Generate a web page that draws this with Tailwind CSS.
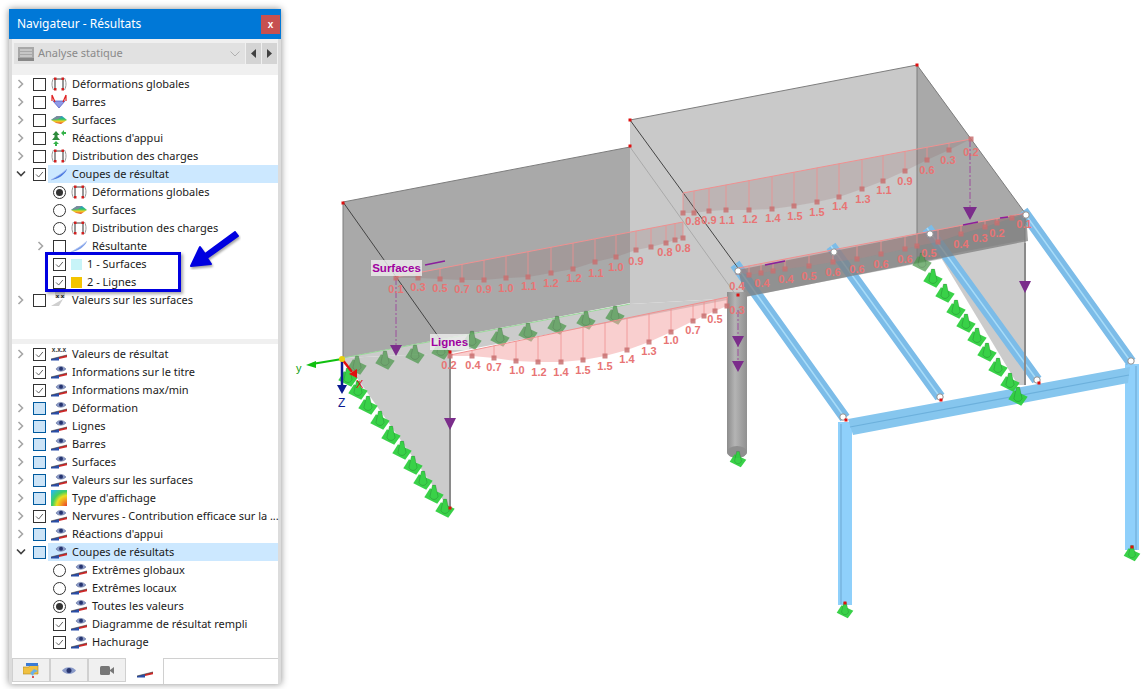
<!DOCTYPE html>
<html lang="fr">
<head>
<meta charset="UTF-8">
<title>Navigateur - Résultats</title>
<script src="https://cdn.jsdelivr.net/npm/@tailwindcss/browser@4"></script>
</head>
<body class="bg-white w-[1146px] h-[689px] overflow-hidden flex font-['Noto_Sans',sans-serif] text-[11px] text-[#1a1a1a]">

<!-- icon symbols -->
<svg class="absolute w-0 h-0">
  <defs>
    <linearGradient id="rainbow" x1="0" y1="0" x2="0" y2="1">
      <stop offset="0" stop-color="#2b8fe0"/><stop offset=".4" stop-color="#2fc46a"/><stop offset=".65" stop-color="#f2d224"/><stop offset="1" stop-color="#e8402c"/>
    </linearGradient>
    <radialGradient id="rings" cx="1" cy="1" r="1.3">
      <stop offset="0" stop-color="#e8402c"/><stop offset=".3" stop-color="#f2a020"/><stop offset=".5" stop-color="#e8e020"/><stop offset=".7" stop-color="#40d060"/><stop offset="1" stop-color="#28b8e8"/>
    </radialGradient>
    <linearGradient id="col" x1="0" y1="0" x2="1" y2="0">
      <stop offset="0" stop-color="#8c8c8c"/><stop offset=".4" stop-color="#b4b4b4"/><stop offset="1" stop-color="#909090"/>
    </linearGradient>
    <symbol id="i-def" viewBox="0 0 16 16">
      <path d="M2.500 14C.5 10 .5 6 2.500 2M13.500 2c2 4 2 8 0 12" fill="none" stroke="#999" stroke-width="1"/>
      <path d="M4 13V3h8v10" fill="none" stroke="#444" stroke-width="1.100"/>
      <rect x="3" y="1.500" width="2.500" height="2.500" fill="#d02020"/><rect x="10.500" y="1.500" width="2.500" height="2.500" fill="#d02020"/>
      <rect x="3" y="12" width="2.500" height="2.500" fill="#d02020"/><rect x="10.500" y="12" width="2.500" height="2.500" fill="#d02020"/>
    </symbol>
    <symbol id="i-bar" viewBox="0 0 16 16">
      <path d="M2 7h12L8 14z" fill="#8f9be8" stroke="#4a58c0" stroke-width=".7"/>
      <path d="M1 1l3 7M15 1l-3 7M1 1v6M15 1v6" stroke="#e02020" stroke-width="1.200" fill="none"/>
    </symbol>
    <symbol id="i-surf" viewBox="0 0 16 16">
      <path d="M0 8l6-4 5 0 5 4-6 4-5-1z" fill="url(#rainbow)"/>
      <path d="M0 8l6-4 5 0-4 3z" fill="#7a8a9a"/>
    </symbol>
    <symbol id="i-reac" viewBox="0 0 16 16">
      <path d="M5 1l3.500 4H6.500v2L9 10H1l2.500-3V5H1.500z" fill="#2e8b3c"/>
      <path d="M5 11l3 3H6v2H4v-2H2z" fill="#35b24a"/>
      <path d="M15 2v2h-2v2l-3-3 3-3v2z" fill="#35b24a"/>
    </symbol>
    <symbol id="i-coupe" viewBox="0 0 16 16">
      <path d="M0 14C5 11 11 8 16 3 14 9 7 13 0 14z" fill="#4a78e0"/>
      <path d="M0 14C5 11 11 8 16 3" fill="none" stroke="#9ab4ee" stroke-width=".8"/>
    </symbol>
    <symbol id="i-vals" viewBox="0 0 16 16">
      <path d="M0 14 12 7l-4 7z" fill="#cfcfcf"/>
      <rect x="4" y="0" width="10" height="6" fill="#d8d8d8"/>
      <text x="9" y="5.500" font-size="6" font-weight="700" text-anchor="middle" fill="#222">x x</text>
    </symbol>
    <symbol id="i-wedge" viewBox="0 0 16 16">
      <path d="M0 13 8 11v3.500H0z" fill="#2b4ea8"/><path d="M8 11l8-2v2.200L8 13z" fill="#d02828"/><path d="M0 13l16-4" stroke="#333" stroke-width=".6"/>
    </symbol>
    <symbol id="i-eye" viewBox="0 0 16 16">
      <use href="#i-wedge" width="16" height="16"/>
      <path d="M5 5c2-3.500 7-3.500 10 0-3 3-8 3-10 0z" fill="#8a9ac8" stroke="#55658f" stroke-width=".5"/>
      <circle cx="10" cy="4.700" r="2" fill="#27356f"/>
    </symbol>
    <symbol id="i-xxx" viewBox="0 0 16 16">
      <use href="#i-wedge" width="16" height="16"/>
      <text x="8" y="5.500" font-size="6.500" font-weight="700" text-anchor="middle" fill="#333" font-family="Liberation Sans">x.x.x</text>
    </symbol>
    <symbol id="i-type" viewBox="0 0 16 16">
      <rect width="16" height="16" fill="url(#rings)"/>
    </symbol>
    <symbol id="c-r" viewBox="0 0 8 10"><path d="M1.500 1l4 4-4 4" fill="none" stroke="#a6a6a6" stroke-width="1.600"/></symbol>
    <symbol id="c-d" viewBox="0 0 10 8"><path d="M1 1.500l4 4 4-4" fill="none" stroke="#404040" stroke-width="1.600"/></symbol>
    <symbol id="tick" viewBox="0 0 13 13"><path d="M2.500 6.500l3 3 5-6" fill="none" stroke="#555" stroke-width="1.100"/></symbol>
    <symbol id="green" viewBox="-13 -13 26 26">
      <path d="M-12 4 -5 -7 12 1 4 12z" fill="currentColor"/>
      <path d="M-5 3-2-11H2L5 3C3 8-3 8-5 3z" fill="currentColor" stroke="#000" stroke-opacity=".2"/>
    </symbol>
  </defs>
</svg>

<!-- navigator panel -->
<aside class="relative shrink-0 ml-[9px] mt-[9px] w-[272px] h-[675px] flex flex-col bg-white shadow-[0_0_7px_rgba(0,0,0,0.45)]">
  <div class="h-[30px] shrink-0 bg-[#0078d7] flex items-center justify-between pl-2 pr-px text-white text-[12px]">
    <span>Navigateur - Résultats</span>
    <span class="w-[19px] h-[19px] bg-[#c75050] flex items-center justify-center font-bold text-[10px] font-['Liberation_Sans',sans-serif]">x</span>
  </div>
  <div class="flex-1 flex flex-col border-x-[3px] border-x-[#dcdcdc] min-h-0">
    <div class="h-[36px] shrink-0 bg-[#f0f0f0] pt-1 pl-0.5 flex gap-px items-start">
      <div class="w-[231px] h-[21px] bg-[#e1e1e1] flex items-center pl-1 text-[#8a8a8a]">
        <svg class="w-[16px] h-[14px]" viewBox="0 0 16 14"><rect width="16" height="14" fill="#a8a8a8"/><path d="M2 3h12M2 6h12M2 9h12" stroke="#e4e4e4"/><rect y="11" width="16" height="3" fill="#888"/></svg>
        <span class="ml-1">Analyse statique</span>
        <svg class="ml-auto mr-[5px] w-[10px] h-[6px]" viewBox="0 0 10 6"><path d="M.5.500 5 5 9.500.500" fill="none" stroke="#b0b0b0"/></svg>
      </div>
      <div class="w-[15px] h-[21px] bg-[#d4d4d4] flex items-center justify-center"><svg class="w-[5px] h-[9px]" viewBox="0 0 5 9"><path d="M5 0v9L0 4.500z" fill="#404040"/></svg></div>
      <div class="w-[15px] h-[21px] bg-[#d4d4d4] flex items-center justify-center"><svg class="w-[5px] h-[9px]" viewBox="0 0 5 9"><path d="M0 0v9l5-4.500z" fill="#404040"/></svg></div>
    </div>

    <!-- results tree -->
    <div class="h-[264px] shrink-0">
      <div class="flex h-[18px] items-center pl-[5px]"><svg class="w-[8px] h-[10px]"><use href="#c-r"/></svg><span class="ml-[8px] w-[13px] h-[13px] border border-[#333] bg-white"></span><svg class="ml-[5px] w-[16px] h-[16px]"><use href="#i-def"/></svg><span class="ml-[5px]">Déformations globales</span></div>
      <div class="flex h-[18px] items-center pl-[5px]"><svg class="w-[8px] h-[10px]"><use href="#c-r"/></svg><span class="ml-[8px] w-[13px] h-[13px] border border-[#333] bg-white"></span><svg class="ml-[5px] w-[16px] h-[16px]"><use href="#i-bar"/></svg><span class="ml-[5px]">Barres</span></div>
      <div class="flex h-[18px] items-center pl-[5px]"><svg class="w-[8px] h-[10px]"><use href="#c-r"/></svg><span class="ml-[8px] w-[13px] h-[13px] border border-[#333] bg-white"></span><svg class="ml-[5px] w-[16px] h-[16px]"><use href="#i-surf"/></svg><span class="ml-[5px]">Surfaces</span></div>
      <div class="flex h-[18px] items-center pl-[5px]"><svg class="w-[8px] h-[10px]"><use href="#c-r"/></svg><span class="ml-[8px] w-[13px] h-[13px] border border-[#333] bg-white"></span><svg class="ml-[5px] w-[16px] h-[16px]"><use href="#i-reac"/></svg><span class="ml-[5px]">Réactions d'appui</span></div>
      <div class="flex h-[18px] items-center pl-[5px]"><svg class="w-[8px] h-[10px]"><use href="#c-r"/></svg><span class="ml-[8px] w-[13px] h-[13px] border border-[#333] bg-white"></span><svg class="ml-[5px] w-[16px] h-[16px]"><use href="#i-def"/></svg><span class="ml-[5px]">Distribution des charges</span></div>
      <div class="flex h-[18px] items-center pl-1"><svg class="w-[10px] h-[8px]"><use href="#c-d"/></svg><span class="ml-[7px] w-[13px] h-[13px] border border-[#333] bg-white"><svg class="w-[11px] h-[11px]"><use href="#tick"/></svg></span><div class="ml-[2px] flex-1 h-full flex items-center bg-[#cce8ff] pl-[3px]"><svg class="w-[16px] h-[16px]"><use href="#i-coupe"/></svg><span class="ml-[5px]">Coupes de résultat</span></div></div>

      <div class="flex h-[18px] items-center pl-[41px]"><span class="w-[13px] h-[13px] rounded-full border border-[#333] bg-white flex items-center justify-center"><span class="w-[7px] h-[7px] rounded-full bg-[#333]"></span></span><svg class="ml-[5px] w-[16px] h-[16px]"><use href="#i-def"/></svg><span class="ml-[5px]">Déformations globales</span></div>
      <div class="flex h-[18px] items-center pl-[41px]"><span class="w-[13px] h-[13px] rounded-full border border-[#333] bg-white"></span><svg class="ml-[5px] w-[16px] h-[16px]"><use href="#i-surf"/></svg><span class="ml-[5px]">Surfaces</span></div>
      <div class="flex h-[18px] items-center pl-[41px]"><span class="w-[13px] h-[13px] rounded-full border border-[#333] bg-white"></span><svg class="ml-[5px] w-[16px] h-[16px]"><use href="#i-def"/></svg><span class="ml-[5px]">Distribution des charges</span></div>
      <div class="flex h-[18px] items-center pl-[25px]"><svg class="w-[8px] h-[10px]"><use href="#c-r"/></svg><span class="ml-[8px] w-[13px] h-[13px] border border-[#333] bg-white"></span><svg class="ml-[5px] w-[16px] h-[16px] opacity-70"><use href="#i-coupe"/></svg><span class="ml-[5px]">Résultante</span></div>
      <div class="flex h-[18px] items-center pl-[41px]"><span class="w-[13px] h-[13px] border border-[#333] bg-white"><svg class="w-[11px] h-[11px]"><use href="#tick"/></svg></span><span class="ml-[5px] w-[11px] h-[11px] bg-[#c8f4f8]"></span><span class="ml-[5px]">1 - Surfaces</span></div>
      <div class="flex h-[18px] items-center pl-[41px]"><span class="w-[13px] h-[13px] border border-[#333] bg-white"><svg class="w-[11px] h-[11px]"><use href="#tick"/></svg></span><span class="ml-[5px] w-[11px] h-[11px] bg-[#f4c400]"></span><span class="ml-[5px]">2 - Lignes</span></div>
      <div class="flex h-[18px] items-center pl-[5px]"><svg class="w-[8px] h-[10px]"><use href="#c-r"/></svg><span class="ml-[8px] w-[13px] h-[13px] border border-[#333] bg-white"></span><svg class="ml-[5px] w-[16px] h-[16px]"><use href="#i-vals"/></svg><span class="ml-[5px]">Valeurs sur les surfaces</span></div>
    </div>

    <div class="h-[5px] shrink-0 bg-[#f0f0f0]"></div>

    <!-- display tree -->
    <div class="flex-1 pt-[1px] min-h-0">
      <div class="flex h-[18px] items-center pl-[5px]"><svg class="w-[8px] h-[10px]"><use href="#c-r"/></svg><span class="ml-[8px] w-[13px] h-[13px] border border-[#333] bg-white"><svg class="w-[11px] h-[11px]"><use href="#tick"/></svg></span><svg class="ml-[5px] w-[16px] h-[16px]"><use href="#i-xxx"/></svg><span class="ml-[5px]">Valeurs de résultat</span></div>
      <div class="flex h-[18px] items-center pl-[21px]"><span class="w-[13px] h-[13px] border border-[#333] bg-white"><svg class="w-[11px] h-[11px]"><use href="#tick"/></svg></span><svg class="ml-[5px] w-[16px] h-[16px]"><use href="#i-eye"/></svg><span class="ml-[5px]">Informations sur le titre</span></div>
      <div class="flex h-[18px] items-center pl-[21px]"><span class="w-[13px] h-[13px] border border-[#333] bg-white"><svg class="w-[11px] h-[11px]"><use href="#tick"/></svg></span><svg class="ml-[5px] w-[16px] h-[16px]"><use href="#i-eye"/></svg><span class="ml-[5px]">Informations max/min</span></div>
      <div class="flex h-[18px] items-center pl-[5px]"><svg class="w-[8px] h-[10px]"><use href="#c-r"/></svg><span class="ml-[8px] w-[13px] h-[13px] border border-[#005a9e] bg-[#cce4f7]"></span><svg class="ml-[5px] w-[16px] h-[16px]"><use href="#i-eye"/></svg><span class="ml-[5px]">Déformation</span></div>
      <div class="flex h-[18px] items-center pl-[5px]"><svg class="w-[8px] h-[10px]"><use href="#c-r"/></svg><span class="ml-[8px] w-[13px] h-[13px] border border-[#005a9e] bg-[#cce4f7]"></span><svg class="ml-[5px] w-[16px] h-[16px]"><use href="#i-eye"/></svg><span class="ml-[5px]">Lignes</span></div>
      <div class="flex h-[18px] items-center pl-[5px]"><svg class="w-[8px] h-[10px]"><use href="#c-r"/></svg><span class="ml-[8px] w-[13px] h-[13px] border border-[#005a9e] bg-[#cce4f7]"></span><svg class="ml-[5px] w-[16px] h-[16px]"><use href="#i-eye"/></svg><span class="ml-[5px]">Barres</span></div>
      <div class="flex h-[18px] items-center pl-[5px]"><svg class="w-[8px] h-[10px]"><use href="#c-r"/></svg><span class="ml-[8px] w-[13px] h-[13px] border border-[#005a9e] bg-[#cce4f7]"></span><svg class="ml-[5px] w-[16px] h-[16px]"><use href="#i-eye"/></svg><span class="ml-[5px]">Surfaces</span></div>
      <div class="flex h-[18px] items-center pl-[5px]"><svg class="w-[8px] h-[10px]"><use href="#c-r"/></svg><span class="ml-[8px] w-[13px] h-[13px] border border-[#005a9e] bg-[#cce4f7]"></span><svg class="ml-[5px] w-[16px] h-[16px]"><use href="#i-eye"/></svg><span class="ml-[5px]">Valeurs sur les surfaces</span></div>
      <div class="flex h-[18px] items-center pl-[5px]"><svg class="w-[8px] h-[10px]"><use href="#c-r"/></svg><span class="ml-[8px] w-[13px] h-[13px] border border-[#005a9e] bg-[#cce4f7]"></span><svg class="ml-[5px] w-[16px] h-[16px]"><use href="#i-type"/></svg><span class="ml-[5px]">Type d'affichage</span></div>
      <div class="flex h-[18px] items-center pl-[5px]"><svg class="shrink-0 w-[8px] h-[10px]"><use href="#c-r"/></svg><span class="shrink-0 ml-[8px] w-[13px] h-[13px] border border-[#333] bg-white"><svg class="w-[11px] h-[11px]"><use href="#tick"/></svg></span><svg class="shrink-0 ml-[5px] w-[16px] h-[16px]"><use href="#i-eye"/></svg><span class="ml-[5px] whitespace-nowrap tracking-[-0.02px]">Nervures - Contribution efficace sur la ...</span></div>
      <div class="flex h-[18px] items-center pl-[5px]"><svg class="w-[8px] h-[10px]"><use href="#c-r"/></svg><span class="ml-[8px] w-[13px] h-[13px] border border-[#005a9e] bg-[#cce4f7]"></span><svg class="ml-[5px] w-[16px] h-[16px]"><use href="#i-eye"/></svg><span class="ml-[5px]">Réactions d'appui</span></div>
      <div class="flex h-[18px] items-center pl-1"><svg class="w-[10px] h-[8px]"><use href="#c-d"/></svg><span class="ml-[7px] w-[13px] h-[13px] border border-[#005a9e] bg-[#cce4f7]"></span><div class="ml-[2px] flex-1 h-full flex items-center bg-[#cce8ff] pl-[3px]"><svg class="w-[16px] h-[16px]"><use href="#i-eye"/></svg><span class="ml-[5px]">Coupes de résultats</span></div></div>
      <div class="flex h-[18px] items-center pl-[41px]"><span class="w-[13px] h-[13px] rounded-full border border-[#333] bg-white"></span><svg class="ml-[5px] w-[16px] h-[16px]"><use href="#i-eye"/></svg><span class="ml-[5px]">Extrêmes globaux</span></div>
      <div class="flex h-[18px] items-center pl-[41px]"><span class="w-[13px] h-[13px] rounded-full border border-[#333] bg-white"></span><svg class="ml-[5px] w-[16px] h-[16px]"><use href="#i-eye"/></svg><span class="ml-[5px]">Extrêmes locaux</span></div>
      <div class="flex h-[18px] items-center pl-[41px]"><span class="w-[13px] h-[13px] rounded-full border border-[#333] bg-white flex items-center justify-center"><span class="w-[7px] h-[7px] rounded-full bg-[#333]"></span></span><svg class="ml-[5px] w-[16px] h-[16px]"><use href="#i-eye"/></svg><span class="ml-[5px]">Toutes les valeurs</span></div>
      <div class="flex h-[18px] items-center pl-[41px]"><span class="w-[13px] h-[13px] border border-[#333] bg-white"><svg class="w-[11px] h-[11px]"><use href="#tick"/></svg></span><svg class="ml-[5px] w-[16px] h-[16px]"><use href="#i-eye"/></svg><span class="ml-[5px]">Diagramme de résultat rempli</span></div>
      <div class="flex h-[18px] items-center pl-[41px]"><span class="w-[13px] h-[13px] border border-[#333] bg-white"><svg class="w-[11px] h-[11px]"><use href="#tick"/></svg></span><svg class="ml-[5px] w-[16px] h-[16px]"><use href="#i-eye"/></svg><span class="ml-[5px]">Hachurage</span></div>
    </div>

    <!-- bottom tabs -->
    <div class="h-[26px] shrink-0 flex items-start">
      <div class="w-[38px] h-[24px] bg-[#f0f0f0] border border-[#d0d0d0] flex items-center justify-center"><svg class="w-[16px] h-[16px]" viewBox="0 0 16 16"><path d="M0 5h6l1-2h8v9H0z" fill="#f0c040" stroke="#b08820" stroke-width=".6"/><rect x="3" y="1" width="12" height="3" fill="#3a7bd5"/><path d="M7 11l4-4 4 2-4 2-1 3z" fill="#6ab0e8"/><circle cx="10" cy="15" r="1" fill="#d02020"/></svg></div>
      <div class="w-[38px] h-[24px] bg-[#f0f0f0] border border-[#d0d0d0] flex items-center justify-center"><svg class="w-[14px] h-[9px]" viewBox="0 0 14 9"><path d="M0 4.500C3 0 11 0 14 4.500 11 9 3 9 0 4.500z" fill="#8a9ac8"/><circle cx="7" cy="4.500" r="2.500" fill="#27356f"/></svg></div>
      <div class="w-[38px] h-[24px] bg-[#f0f0f0] border border-[#d0d0d0] flex items-center justify-center"><svg class="w-[14px] h-[9px]" viewBox="0 0 14 9"><rect width="10" height="9" rx="1.500" fill="#777"/><path d="M10 4l4-3v7l-4-3z" fill="#777"/></svg></div>
      <div class="w-[38px] h-[26px] bg-white flex items-center justify-center border-r border-[#d0d0d0]"><svg class="w-[16px] h-[16px]"><use href="#i-wedge"/></svg></div>
      <div class="flex-1 h-px bg-[#d0d0d0]"></div>
    </div>
  </div>

  <!-- callout over the tree -->
  <div class="absolute left-[36px] top-[243px] w-[136px] h-[40px] border-[3px] border-[#0000e0] shadow-[2px_2px_3px_rgba(0,0,0,0.35)]"></div>
  <svg class="absolute left-[178px] top-[217px] w-[54px] h-[44px]" viewBox="0 0 54 44">
    <path d="M48 6 18 28l-5-7L4 40l20-2-4-6L51 10z" fill="#0000e0" stroke="#0000e0" stroke-width="2" stroke-linejoin="round" style="filter:drop-shadow(1px 2px 1px rgba(0,0,0,.35))"/>
  </svg>
</aside>

<!-- 3D view -->
<svg id="view" class="shrink-0 w-[865px] h-[689px] font-['Liberation_Sans',sans-serif]" viewBox="281 0 865 689">
  <!-- walls -->
  <path d="M343 358 630 304 738 298 450 353z" fill="#cbcbcb"/>
  <path d="M343 358 450 353V510z" fill="#cbcbcb"/>
  <path d="M343 202 630 147V303L343 358z" fill="#a9a9a9"/>
  <path d="M630 120 917 65 1025 213V243L738 298 630 304z" fill="#c9c9c9"/>
  <path d="M917 65 1025 213V240L917 262z" fill="#a9a9a9"/>
  <path d="M940 256 1025 240V385H1018z" fill="#cbcbcb"/>
  <!-- frame beams -->
  <g id="frame">
    <path d="M838 422h14v183h-14zM1125 364h14v186h-14z" fill="#8fd0fb"/>
    <path d="M841 424v180M1136 366v184" stroke="#7dbbe6" stroke-width="2"/>
    <path d="M735 264 845 418M831 246 940 397M927 228 1037 380M1023 211 1131 362" stroke="#7cbce8" stroke-width="11"/>
    <path d="M735 264 845 418M831 246 940 397M927 228 1037 380M1023 211 1131 362" stroke="#a8dcf8" stroke-width="1.500"/>
    <path d="M848 419 1130 367 1128 383 853 435z" fill="#86c6ee"/>
    <path d="M850 427 1129 375" stroke="#6cb0dc" stroke-width="1.200"/>
  </g>
  <path d="M738 270 1026 213 1028 241 745 297z" fill="#7c7c7c" fill-opacity=".72"/>
  <path d="M727 292h20v160a10 6 0 0 1-20 0z" fill="url(#col)"/>
  <ellipse cx="737" cy="452" rx="10" ry="6" fill="#8f8f8f"/>
  <path d="M343 202V358M343 202 630 147M630 120 917 65M917 65V262M917 65 1025 213M1025 213V385" stroke="#7d7d7d" stroke-width="1" fill="none"/>
  <path d="M450 353V512M1025 243V385" stroke="#8a8a8a" stroke-width="2"/>
  <path d="M343 202 450 353M630 120 738 268" stroke="#444" stroke-width="1" fill="none"/>
  <path d="M630 147 738 298" stroke="#aaa" stroke-width="1"/>
  <path d="M343 358 630 304" stroke="#98d898" stroke-width="1"/>
  <g id="sup"></g>
  <path d="M396 278V345M970 140V208M738 310V370" stroke="#9c4f9c" stroke-width="1" stroke-dasharray="7 2 2 2"/>
  <g id="dia"></g>
  <path d="M390 345h12l-6 11zM963 207h14l-7 13zM732 336h12l-6 11zM732 361h12l-6 11zM444 418h12l-6 12zM1019 281h12l-6 12z" fill="#7b2d8b"/>
  <path d="M963 225l15-3M1000 218l8-1M425 265l20-4M765 265l20-4" stroke="#8a1f9c" stroke-width="1.500"/>
  <g id="nodes"></g>
  <!-- labels -->
  <rect x="371" y="260" width="51" height="16" fill="#efefef" fill-opacity=".8"/>
  <text x="396.500" y="272" text-anchor="middle" font-size="11.500" font-weight="700" fill="#a000a0">Surfaces</text>
  <rect x="430" y="334" width="39" height="16" fill="#efefef" fill-opacity=".8"/>
  <text x="449.500" y="346" text-anchor="middle" font-size="11.500" font-weight="700" fill="#a000a0">Lignes</text>
  <!-- axes -->
  <path d="M342 359 312 364" stroke="#10c010" stroke-width="2"/><path d="M306 365l10-4v7z" fill="#10c010"/>
  <path d="M342 359V386" stroke="#0a1a90" stroke-width="2.500"/><path d="M337 385h10l-5 9z" fill="#0a1a90"/>
  <path d="M342 359 352 372" stroke="#e01010" stroke-width="2.500"/><path d="M349 374l8-5 0 9z" fill="#e01010"/>
  <circle cx="342" cy="359" r="3" fill="#e8d010"/>
  <text x="296" y="372" font-size="11" fill="#10a010">y</text>
  <text x="338" y="407" font-size="12" fill="#0a1a90">Z</text>
  <text x="356" y="388" font-size="11" fill="#e01010">X</text>
</svg>

<script>
  const NS = 'http://www.w3.org/2000/svg';
  const add = (parent, tag, attrs, txt) => {
    const e = document.createElementNS(NS, tag);
    for (const k in attrs) e.setAttribute(k, attrs[k]);
    if (txt) e.textContent = txt;
    parent.appendChild(e);
  };

  // supports: muted ones behind the wall, bright ones on white
  const sup = document.getElementById('sup');
  const support = (x, y, size, color, op) => add(sup, 'use', { href: '#green', x: x - size / 2, y: y - size / 2, width: size, height: size, style: 'color:' + color, opacity: op });
  [[357,365],[385,360],[415,354],[441,350],[472,340],[500,337],[528,332],[557,325],[586,320],[615,315],[922,262]].forEach(p => support(p[0], p[1], 21, '#4f9a4f', .75));
  [[348,377],[358,390],[368,405],[380,420],[391,435],[402,450],[413,465],[423,480],[434,494],[445,508],
   [933,278],[945,293],[956,309],[966,323],[977,337],[987,352],[998,367],[1010,382],[1018,396]].forEach(p => support(p[0], p[1], 21, '#2fcf3f', .95));
  [[738,459],[845,610],[1132,553]].forEach(p => support(p[0], p[1], 18, '#2fcf3f', .95));

  // result diagrams: top edge, squares along the curve, labels
  const dia = document.getElementById('dia');
  const diagrams = [
    { fill: '#8a5a5a', op: .18, top: [[396,277],[683,222]], pts: [[396,278],[418,278],[440,279],[462,280],[484,280],[506,278],[528,277],[551,273],[573,269],[595,262],[616,257],[636,250],[651,247],[666,243],[675,240],[683,238]],
      labels: [['0.1',396,293],['0.3',418,291],['0.5',440,292],['0.7',462,293],['0.9',484,293],['1.0',506,292],['1.1',529,290],['1.2',551,287],['1.2',574,282],['1.1',596,277],['1.0',616,271],['0.9',636,265],['0.8',665,256],['0.8',683,252]] },
    { fill: '#8a5a5a', op: .18, top: [[683,193],[971,139]], pts: [[683,213],[694,213],[709,211],[726,210],[749,210],[772,209],[794,206],[817,202],[839,197],[862,189],[883,181],[905,171],[927,160],[949,150],[971,139]],
      labels: [['0.8',693,225],['0.9',709,224],['1.1',727,224],['1.2',750,223],['1.4',773,222],['1.5',795,220],['1.5',817,216],['1.4',840,210],['1.3',863,203],['1.1',884,194],['0.9',905,185],['0.6',927,174],['0.3',948,164],['0.2',971,156]] },
    { fill: '#f4a0a0', op: .5, top: [[450,355],[728,297]], pts: [[450,356],[472,356],[494,358],[516,361],[538,362],[561,362],[583,360],[605,356],[627,350],[649,342],[671,332],[693,321],[704,316],[715,311],[727,306]],
      labels: [['0.2',449,369],['0.4',473,369],['0.7',494,371],['1.0',517,374],['1.2',539,376],['1.4',561,376],['1.5',583,374],['1.5',605,370],['1.4',627,363],['1.3',649,355],['1.0',671,344],['0.7',693,334],['0.5',715,323]] },
    { fill: '#c08080', op: .3, top: [[738,268],[1026,213]], pts: [[738,272],[749,275],[761,273],[773,271],[785,269],[809,266],[833,262],[857,259],[881,254],[905,249],[917,246],[938,242],[961,234],[985,227],[997,223],[1012,218],[1025,215]],
      labels: [['0.4',737,290],['0.3',737,314],['0.4',762,287],['0.4',786,283],['0.5',809,280],['0.6',833,276],['0.6',857,273],['0.6',881,268],['0.6',905,263],['0.5',929,257],['0.4',961,248],['0.3',980,242],['0.2',997,237],['0.1',1024,228]] },
  ];
  diagrams.forEach(d => {
    const a = d.top[0], b = d.top[1];
    const poly = [a, b].concat(d.pts.slice().reverse());
    add(dia, 'polygon', { points: poly.map(p => p.join(',')).join(' '), fill: d.fill, 'fill-opacity': d.op });
    add(dia, 'line', { x1: a[0], y1: a[1], x2: b[0], y2: b[1], stroke: '#f09090', 'stroke-width': 1 });
    d.pts.forEach(p => {
      const t = (p[0] - a[0]) / (b[0] - a[0]);
      add(dia, 'line', { x1: p[0], y1: a[1] + t * (b[1] - a[1]), x2: p[0], y2: p[1], stroke: '#f09090', 'stroke-width': .8 });
      add(dia, 'rect', { x: p[0] - 2.5, y: p[1] - 2.5, width: 5, height: 5, fill: '#c87070', 'fill-opacity': .85 });
    });
    d.labels.forEach(l => add(dia, 'text', { x: l[1], y: l[2], 'text-anchor': 'middle', 'font-size': 11, 'font-weight': 700, fill: '#e87474' }, l[0]));
  });

  const nodes = document.getElementById('nodes');
  [[738,271],[834,252],[930,234],[1026,215],[1037,380],[940,397],[843,417],[1131,361]].forEach(p => add(nodes, 'circle', { cx: p[0], cy: p[1], r: 3.2, fill: '#fff', stroke: '#8f8f8f', 'stroke-width': 1 }));
  [[343,203],[630,120],[917,65],[630,146],[450,352],[738,295],[450,508],[845,603],[1132,547],[1039,383],[941,400],[846,420]].forEach(p => add(nodes, 'rect', { x: p[0] - 1.5, y: p[1] - 1.5, width: 3, height: 3, fill: '#e01010' }));
</script>
</body>
</html>
